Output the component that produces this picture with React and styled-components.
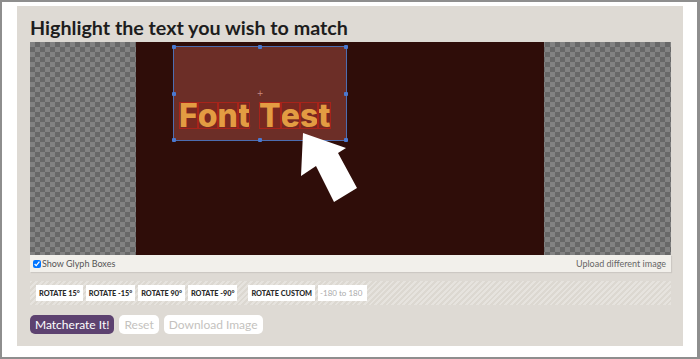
import React from "react";
import styled, { createGlobalStyle } from "styled-components";

const Global = createGlobalStyle`
  html, body { margin: 0; padding: 0; background: #fff; }
  body { font-family: Lato, "Liberation Sans", sans-serif; }
`;

const Frame = styled.div`
  box-sizing: border-box;
  width: 700px;
  height: 359px;
  border: 2px solid #8e8e8e;
  border-right-width: 3px;
  background: #fff;
  padding: 4px 14px 0 15px;
`;

const Panel = styled.div`
  width: 666px;
  height: 340px;
  background: #dedad4;
  padding: 10px 12px 0 13px;
  box-sizing: border-box;
`;

const Title = styled.h1`
  margin: 0 0 2px;
  font-size: 19.7px;
  line-height: 24px;
  font-weight: 700;
  color: #1d1d1d;
`;

const Canvas = styled.div`
  display: flex;
  height: 213px;
  background-color: #787878;
  background-image: conic-gradient(#686868 25%, #828282 0 50%, #686868 0 75%, #828282 0);
  background-size: 10px 10px;
`;

const Photo = styled.div`
  position: relative;
  margin-left: 106px;
  width: 408px;
  height: 100%;
  background: #2f0d09;
`;

const Selection = styled.div`
  position: absolute;
  left: 37px;
  top: 4px;
  width: 174px;
  height: 95px;
  box-sizing: border-box;
  border: 1px solid #4d6db0;
  background: #6c2e27;
`;

const Handle = styled.span`
  position: absolute;
  width: 4px;
  height: 4px;
  border-radius: 1px;
  background: #4a78d0;
  left: ${(p) => p.$x}%;
  top: ${(p) => p.$y}%;
  transform: translate(-50%, -50%);
`;

const Cross = styled.span`
  position: absolute;
  left: 50%;
  top: 50%;
  transform: translate(-50%, -50%);
  font-size: 8px;
  line-height: 8px;
  color: #c98a80;
  font-family: "DejaVu Sans", sans-serif;
`;

const Sample = styled.div`
  position: absolute;
  left: 5px;
  top: 55px;
  display: flex;
  font-family: Inter, "DejaVu Sans", sans-serif;
  font-weight: 800;
  font-size: 32px;
  color: #e39c42;
`;

const Glyph = styled.span`
  display: inline-block;
  height: 27px;
  line-height: 28px;
  box-sizing: border-box;
  outline: ${(p) => (p.$space ? "none" : "1.5px solid #a8231a")};
  outline-offset: -1px;
  background: ${(p) => (p.$space ? "transparent" : "rgba(150,25,18,0.3)")};
  width: ${(p) => (p.$space ? "9px" : "auto")};
`;

const Arrow = styled.svg`
  position: absolute;
  left: 0;
  top: 0;
`;

const GlyphBar = styled.div`
  display: flex;
  align-items: center;
  justify-content: space-between;
  height: 17px;
  padding: 0 5px 0 3px;
  background: #f2f0eb;
  box-shadow: 1px 1px 1px rgba(0,0,0,0.08);
  font-size: 9px;
  color: #555;
`;

const Check = styled.label`
  display: flex;
  align-items: center;
  input {
    width: 8px;
    height: 8px;
    margin: 0 1px 0 0;
  }
`;

const Upload = styled.span`
  color: #666;
`;

const RotateRow = styled.div`
  display: flex;
  align-items: center;
  gap: 3px;
  margin-top: 9px;
  height: 24px;
  padding: 0 6px;
  background: repeating-linear-gradient(135deg, #e6e3de 0 2px, #dcd8d1 2px 4px);
`;

const RotateBtn = styled.button`
  height: 16px;
  padding: 0 3px;
  border: none;
  background: #fff;
  font-family: Lato, "Liberation Sans", sans-serif;
  font-weight: 900;
  font-size: 7.3px;
  color: #2a2a2a;
  margin-left: ${(p) => (p.$gap ? "8px" : "0")};
`;

const AngleInput = styled.input`
  width: 49px;
  height: 16px;
  box-sizing: border-box;
  border: none;
  padding: 0 2px;
  font-family: Lato, "Liberation Sans", sans-serif;
  font-size: 8px;
  &::placeholder { color: #aaa; }
`;

const Actions = styled.div`
  display: flex;
  gap: 5px;
  margin-top: 10px;
`;

const ActionBtn = styled.button`
  height: 19px;
  padding: 0 5px;
  border: none;
  border-radius: 5px;
  font-family: Lato, "Liberation Sans", sans-serif;
  font-size: 12px;
  background: ${(p) => (p.$primary ? "#5d4270" : "#fff")};
  color: ${(p) => (p.$primary ? "#fff" : "#c4c2be")};
`;

const handles = [
  [0, 0], [50, 0], [100, 0],
  [0, 50], [100, 50],
  [0, 100], [50, 100], [100, 100],
];

export default function App() {
  return (
    <>
      <Global />
      <Frame>
        <Panel>
          <Title>Highlight the text you wish to match</Title>
          <Canvas>
            <Photo>
              <Selection>
                <Sample>
                  {"Font Test".split("").map((c, i) =>
                    c === " " ? <Glyph key={i} $space /> : <Glyph key={i}>{c}</Glyph>
                  )}
                </Sample>
                <Cross>+</Cross>
                {handles.map(([x, y], i) => (
                  <Handle key={i} $x={x} $y={y} />
                ))}
              </Selection>
              <Arrow width="408" height="213" viewBox="0 0 408 213">
                <polygon
                  points="167,91 165,134 180,124 198,160 221,146 202,111 210,106"
                  fill="#fff"
                />
              </Arrow>
            </Photo>
          </Canvas>
          <GlyphBar>
            <Check>
              <input type="checkbox" defaultChecked />
              Show Glyph Boxes
            </Check>
            <Upload>Upload different image</Upload>
          </GlyphBar>
          <RotateRow>
            <RotateBtn>ROTATE 15°</RotateBtn>
            <RotateBtn>ROTATE -15°</RotateBtn>
            <RotateBtn>ROTATE 90°</RotateBtn>
            <RotateBtn>ROTATE -90°</RotateBtn>
            <RotateBtn $gap>ROTATE CUSTOM</RotateBtn>
            <AngleInput placeholder="-180 to 180" />
          </RotateRow>
          <Actions>
            <ActionBtn $primary>Matcherate It!</ActionBtn>
            <ActionBtn>Reset</ActionBtn>
            <ActionBtn>Download Image</ActionBtn>
          </Actions>
        </Panel>
      </Frame>
    </>
  );
}
